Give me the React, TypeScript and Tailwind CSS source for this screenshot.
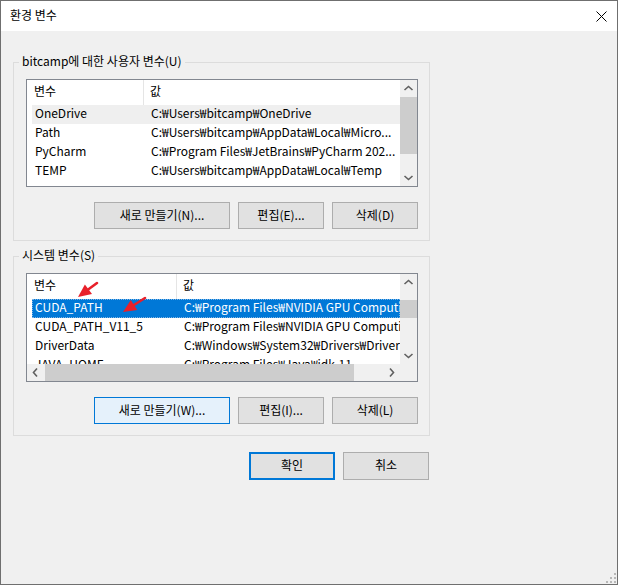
import React from "react";

interface Row {
  name: string;
  value: string;
}

const userRows: Row[] = [
  { name: "OneDrive", value: "C:₩Users₩bitcamp₩OneDrive" },
  { name: "Path", value: "C:₩Users₩bitcamp₩AppData₩Local₩Micro..." },
  { name: "PyCharm", value: "C:₩Program Files₩JetBrains₩PyCharm 202..." },
  { name: "TEMP", value: "C:₩Users₩bitcamp₩AppData₩Local₩Temp" },
];

const systemRows: Row[] = [
  { name: "CUDA_PATH", value: "C:₩Program Files₩NVIDIA GPU Computing Toolkit₩CUDA₩v11.5" },
  { name: "CUDA_PATH_V11_5", value: "C:₩Program Files₩NVIDIA GPU Computing Toolkit₩CUDA₩v11.5" },
  { name: "DriverData", value: "C:₩Windows₩System32₩Drivers₩DriverData" },
  { name: "JAVA_HOME", value: "C:₩Program Files₩Java₩jdk-11" },
];

function Chevron({ dir }: { dir: "up" | "down" | "left" | "right" }) {
  const d = {
    up: "M4.5 10 L8.5 6.5 L12.5 10",
    down: "M4.5 7 L8.5 10.5 L12.5 7",
    left: "M10 4.5 L6.5 8.5 L10 12.5",
    right: "M7 4.5 L10.5 8.5 L7 12.5",
  }[dir];
  return (
    <svg width="17" height="17" viewBox="0 0 17 17" className="shrink-0">
      <path d={d} fill="none" stroke="#606060" strokeWidth="1.6" />
    </svg>
  );
}

function Button({
  label,
  w,
  h = "h-[27px]",
  variant = "normal",
}: {
  label: string;
  w: string;
  h?: string;
  variant?: "normal" | "focus" | "default";
}) {
  const look =
    variant === "focus"
      ? "bg-[#e5f1fb] border border-[#0078d7]"
      : variant === "default"
        ? "bg-[#e1e1e1] border-2 border-[#0078d7]"
        : "bg-[#e1e1e1] border border-[#adadad]";
  return (
    <div className={`${w} ${h} ${look} flex items-center justify-center pb-[2px] text-[12px] text-black`}>
      {label}
    </div>
  );
}

function ListView({
  rows,
  nameWidth,
  selected,
  hover,
  hscroll,
}: {
  rows: Row[];
  nameWidth: string;
  selected?: number;
  hover?: number;
  hscroll?: boolean;
}) {
  const content = (
    <div className="flex-1 overflow-hidden bg-white pl-[5px]">
      <div className="flex h-[25px]">
        <div className={`${nameWidth} h-full border-r border-[#e5e5e5] pl-[2px] pb-[4px] flex items-center`}>변수</div>
        <div className="pl-[6px] pb-[4px] flex items-center">값</div>
      </div>
      {rows.map((r, i) => {
        const sel = i === selected;
        const hov = i === hover;
        return (
          <div
            key={r.name}
            className={`flex h-[19px] pb-[3px] items-center whitespace-nowrap ${
              sel
                ? "bg-[#0078d7] text-white outline-1 outline-dotted outline-[#7fb4e4] -outline-offset-1"
                : hov
                  ? "bg-[#efefef]"
                  : ""
            }`}
          >
            <div className={`${nameWidth} shrink-0 pl-[3px]`}>{r.name}</div>
            <div className="pl-[7px] shrink-0">{r.value}</div>
          </div>
        );
      })}
    </div>
  );

  if (!hscroll) {
    return (
      <div className="w-[392px] h-[108px] border border-[#828790] flex text-[12px] leading-[16px]">
        {content}
        <div className="w-[17px] bg-[#f0f0f0] flex flex-col">
          <Chevron dir="up" />
          <div className="h-[57px] bg-[#cdcdcd]" />
          <div className="flex-1" />
          <Chevron dir="down" />
        </div>
      </div>
    );
  }

  return (
    <div className="w-[392px] h-[109px] border border-[#828790] flex flex-col text-[12px] leading-[16px]">
      <div className="flex h-[90px]">
        {content}
        <div className="w-[17px] bg-[#f0f0f0] flex flex-col">
          <Chevron dir="up" />
          <div className="h-[9px]" />
          <div className="h-[18px] bg-[#cdcdcd]" />
          <div className="flex-1" />
          <Chevron dir="down" />
        </div>
      </div>
      <div className="flex h-[17px] bg-[#f0f0f0]">
        <Chevron dir="left" />
        <div className="flex-1 flex">
          <div className="ml-[1px] w-[309px] bg-[#cdcdcd]" />
        </div>
        <Chevron dir="right" />
        <div className="w-[17px]" />
      </div>
    </div>
  );
}

function Group({
  title,
  children,
  className = "",
}: {
  title: string;
  children: React.ReactNode;
  className?: string;
}) {
  return (
    <div className={`relative w-[417px] border border-[#dcdcdc] pl-[12px] pt-[16px] pb-[11px] ${className}`}>
      <div className="absolute left-[5px] -top-[10px] px-[3px] bg-[#f0f0f0] text-[12px] leading-[16px]">
        {title}
      </div>
      {children}
    </div>
  );
}

function Arrow({ tip, tail, base, c1, c2 }: { tip: string; tail: string; base: string; c1: string; c2: string }) {
  const [x1, y1] = tail.split(",");
  const [x2, y2] = base.split(",");
  return (
    <>
      <line x1={x1} y1={y1} x2={x2} y2={y2} stroke="#e8202a" strokeWidth="2.6" strokeLinecap="round" />
      <polygon points={`${tip} ${c1} ${c2}`} fill="#e8202a" />
    </>
  );
}

export default function App() {
  return (
    <div className="relative w-[618px] h-[585px] overflow-hidden border border-[#6f6f6f] bg-[#f0f0f0] text-black font-['Noto_Sans_CJK_KR',sans-serif]">
      {/* title bar */}
      <div className="h-[30px] bg-white flex items-center justify-between pl-[9px] pr-[10px]">
        <span className="text-[12px] leading-[16px] pb-[2px]">환경 변수</span>
        <svg width="11" height="11" viewBox="0 0 11 11">
          <path d="M0.5 0.5 L10.5 10.5 M10.5 0.5 L0.5 10.5" stroke="#000" strokeWidth="1" />
        </svg>
      </div>

      <div className="pl-[12px] pt-[31px]">
        <Group title="bitcamp에 대한 사용자 변수(U)">
          <ListView rows={userRows} nameWidth="w-[112px]" hover={0} />
          <div className="mt-[15px] w-[392px] flex justify-end gap-[8px]">
            <Button label="새로 만들기(N)..." w="w-[136px]" />
            <Button label="편집(E)..." w="w-[86px]" />
            <Button label="삭제(D)" w="w-[86px]" />
          </div>
        </Group>

        <Group title="시스템 변수(S)" className="mt-[15px]">
          <ListView rows={systemRows} nameWidth="w-[145px]" selected={0} hscroll />
          <div className="mt-[15px] w-[392px] flex justify-end gap-[8px]">
            <Button label="새로 만들기(W)..." w="w-[136px]" variant="focus" />
            <Button label="편집(I)..." w="w-[86px]" />
            <Button label="삭제(L)" w="w-[86px]" />
          </div>
        </Group>

        <div className="mt-[16px] w-[417px] pr-[1px] flex justify-end gap-[8px]">
          <Button label="확인" w="w-[86px]" h="h-[28px]" variant="default" />
          <Button label="취소" w="w-[86px]" h="h-[28px]" />
        </div>
      </div>

      {/* red annotation arrows */}
      <svg className="absolute left-[-1px] top-[-1px] pointer-events-none" width="618" height="585">
        <Arrow tip="78,297" tail="97,283" base="88.5,289.3" c1="92,294.1" c2="84.9,284.5" />
        <Arrow tip="123,312" tail="145,298" base="134,305" c1="137.2,310.1" c2="130.8,299.9" />
      </svg>

      {/* resize grip */}
      <div className="absolute right-[1px] bottom-[1px] grid grid-cols-3 gap-[2px]">
        <span className="w-[2px] h-[2px]" />
        <span className="w-[2px] h-[2px]" />
        <span className="w-[2px] h-[2px] bg-[#b8b8b8]" />
        <span className="w-[2px] h-[2px]" />
        <span className="w-[2px] h-[2px] bg-[#b8b8b8]" />
        <span className="w-[2px] h-[2px] bg-[#b8b8b8]" />
        <span className="w-[2px] h-[2px] bg-[#b8b8b8]" />
        <span className="w-[2px] h-[2px] bg-[#b8b8b8]" />
        <span className="w-[2px] h-[2px] bg-[#b8b8b8]" />
      </div>
    </div>
  );
}
